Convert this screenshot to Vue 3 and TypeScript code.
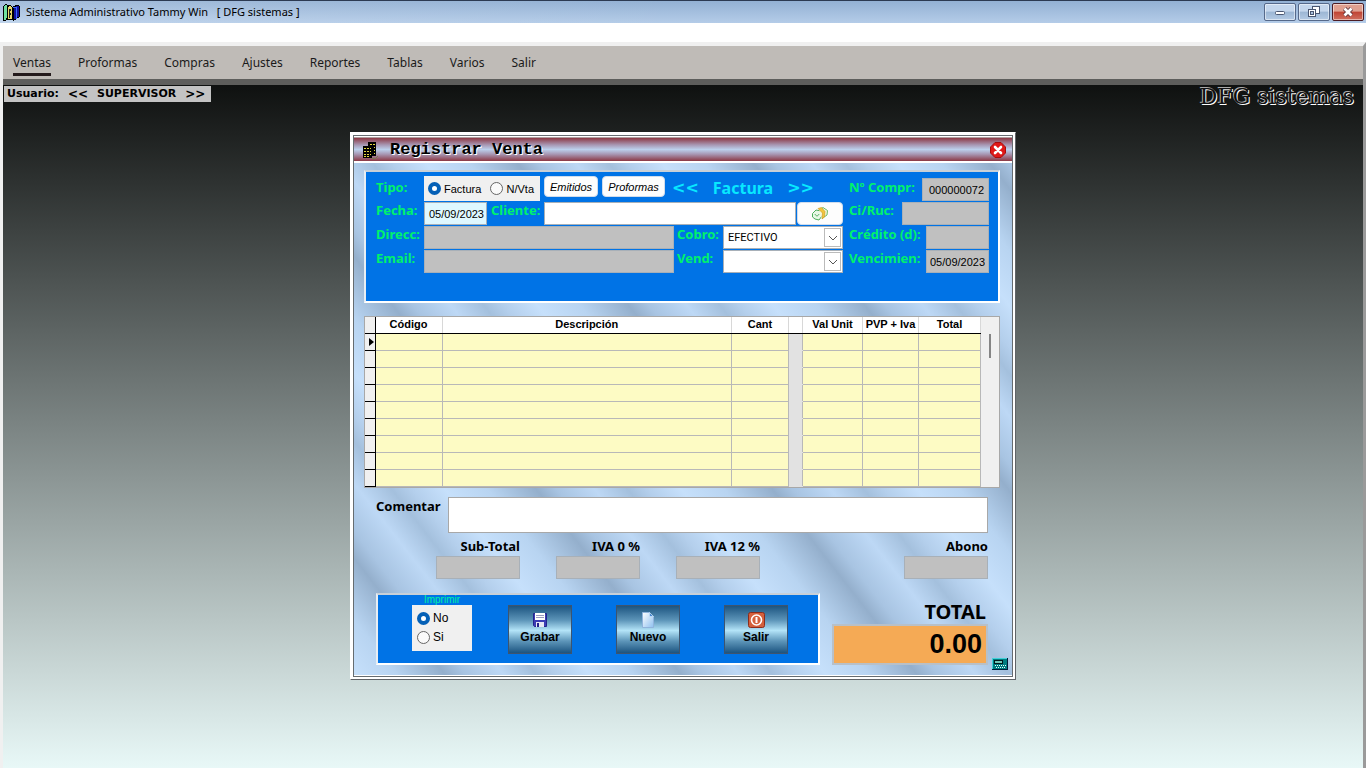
<script setup lang="ts">
import { ref } from 'vue'

const menu: string[] = ['Ventas', 'Proformas', 'Compras', 'Ajustes', 'Reportes', 'Tablas', 'Varios', 'Salir']
const rows: number[] = [1, 2, 3, 4, 5, 6, 7, 8, 9]
const tipo = ref<string>('factura')
const imprimir = ref<string>('no')
const fecha = ref<string>('05/09/2023')
const cliente = ref<string>('')
const cobro = ref<string>('EFECTIVO')
const vendedor = ref<string>('')
const comentario = ref<string>('')
</script>

<template>
  <div class="app">
    <header class="titlebar">
      <svg class="books" width="18" height="18" viewBox="0 0 18 18" shape-rendering="crispEdges">
        <path d="M1 4l3-3 1 1v13l-1 2H1z" fill="#6fe0a0" stroke="#000" />
        <path d="M5 4l3-2 2 2v12H5z" fill="#e8d86a" stroke="#000" />
        <path d="M7 6v9M8 6v2M8 10v2" stroke="#222" />
        <path d="M11 4l5-2 1 1v11l-5 3h-1z" fill="#10109c" stroke="#000" />
        <path d="M11 4l3 0v12" fill="none" stroke="#3a6cff" />
      </svg>
      <h1>Sistema Administrativo Tammy Win &nbsp; [ DFG sistemas ]</h1>
      <div class="winbtns">
        <button type="button" aria-label="Minimizar">
          <svg width="14" height="12" viewBox="0 0 14 12"><rect x="2.500" y="5.500" width="9" height="3" rx="1" fill="#fff" stroke="#4a5670" /></svg>
        </button>
        <button type="button" aria-label="Restaurar">
          <svg width="14" height="12" viewBox="0 0 14 12" fill="#fff" stroke="#4a5670">
            <rect x="5.500" y=".5" width="7" height="7" />
            <rect x="1.500" y="3.500" width="7" height="7" />
            <rect x="3.500" y="5.500" width="3" height="3" fill="#a9c0dc" />
          </svg>
        </button>
        <button type="button" class="close" aria-label="Cerrar ventana">
          <svg width="14" height="12" viewBox="0 0 14 12">
            <path d="M3.500 2.500l7 7M10.500 2.500l-7 7" stroke="#5a3038" stroke-width="4.400" />
            <path d="M3.500 2.500l7 7M10.500 2.500l-7 7" stroke="#fff" stroke-width="2.800" />
          </svg>
        </button>
      </div>
    </header>

    <div class="blank"></div>

    <div class="frame">
      <nav class="menu">
        <a v-for="(item, i) in menu" :key="item" href="#" :class="{ active: i === 0 }">{{ item }}</a>
      </nav>

      <main class="desk">
        <div class="status">
          <span class="user"><span>Usuario:</span><span class="chev">&lt;&lt;</span><span>SUPERVISOR</span><span class="chev">&gt;&gt;</span></span>
          <span class="brand">DFG sistemas</span>
        </div>

        <section class="dialog" aria-labelledby="dlg-title">
          <div class="dialog-title">
            <svg width="16" height="18" viewBox="0 0 16 18" shape-rendering="crispEdges">
              <rect x="6" y="1" width="8" height="14" fill="#000" />
              <rect x="1" y="5" width="9" height="12" fill="#000" />
              <path d="M8 3h5M12 6h1M12 9h1M12 12h1M2 7h7M2 10h7M2 13h7M2 15h5" stroke="#e6d840" stroke-width="1" stroke-dasharray="2 1" />
              <path d="M10 17h4l2-2" stroke="#7a7a50" fill="none" />
            </svg>
            <h2 id="dlg-title">Registrar Venta</h2>
            <button type="button" aria-label="Cerrar">
              <svg width="16" height="16" viewBox="0 0 16 16">
                <path d="M5 .5h6L15.500 5v6L11 15.500H5L.5 11V5z" fill="#e01818" stroke="#a80c0c" />
                <path d="M5 5l6 6M11 5l-6 6" stroke="#fff" stroke-width="2.600" stroke-linecap="round" />
              </svg>
            </button>
          </div>

          <form class="body" @submit.prevent>
            <div class="panel top">
              <div class="left">
                <div class="row first">
                  <span class="lbl w48">Tipo:</span>
                  <div class="radios" role="radiogroup" aria-label="Tipo">
                    <label><input v-model="tipo" type="radio" name="tipo" value="factura" />Factura</label>
                    <label><input v-model="tipo" type="radio" name="tipo" value="nvta" />N/Vta</label>
                  </div>
                  <button type="button" class="mini">Emitidos</button>
                  <button type="button" class="mini wide">Proformas</button>
                  <span class="kind"><span class="chev">&lt;&lt;</span><span>Factura</span><span class="chev">&gt;&gt;</span></span>
                </div>
                <div class="row">
                  <label class="lbl w48" for="fecha">Fecha:</label>
                  <input id="fecha" v-model="fecha" class="box date" type="text" />
                  <label class="lbl cli" for="cliente">Cliente:</label>
                  <input id="cliente" v-model="cliente" class="box white grow" type="text" />
                  <button type="button" class="search" aria-label="Buscar cliente">
                    <svg width="18" height="16" viewBox="0 0 18 16">
                      <path d="M1.500 7.500L5 4l5 1 1 5-3 4-4-1-2.500-2z" fill="#e8f8e6" stroke="#4cae5c" />
                      <path d="M8 4l4-2.500 4.500 3L16 9l-5 3.500" fill="#f4f8dc" stroke="#6cba68" />
                      <path d="M7 2.500l3.500-1 3.500 4-.5 5.500-2.500 2 .5-6z" fill="#f2c63c" stroke="#c89420" stroke-width=".6" />
                      <path d="M4 8c1 2.500 3 2.500 4 0" fill="none" stroke="#4cae5c" />
                    </svg>
                  </button>
                </div>
                <div class="row">
                  <label class="lbl w48" for="dir">Direcc:</label>
                  <input id="dir" class="box long" type="text" readonly />
                  <label class="lbl w49" for="cobro">Cobro:</label>
                  <div class="combo">
                    <select id="cobro" v-model="cobro"><option>EFECTIVO</option></select>
                    <span class="arrow"><svg width="10" height="6" viewBox="0 0 10 6"><path d="M1 1l4 4 4-4" fill="none" stroke="#555" /></svg></span>
                  </div>
                </div>
                <div class="row">
                  <label class="lbl w48" for="email">Email:</label>
                  <input id="email" class="box long" type="text" readonly />
                  <label class="lbl w49" for="vend">Vend:</label>
                  <div class="combo">
                    <select id="vend" v-model="vendedor"><option value=""></option></select>
                    <span class="arrow"><svg width="10" height="6" viewBox="0 0 10 6"><path d="M1 1l4 4 4-4" fill="none" stroke="#555" /></svg></span>
                  </div>
                </div>
              </div>
              <div class="right">
                <div class="row first">
                  <label class="lbl" for="compr">Nº Compr:</label>
                  <input id="compr" class="box w67" type="text" value="000000072" readonly />
                </div>
                <div class="row">
                  <label class="lbl" for="ruc">Ci/Ruc:</label>
                  <input id="ruc" class="box w87" type="text" readonly />
                </div>
                <div class="row">
                  <label class="lbl" for="credito">Crédito (d):</label>
                  <input id="credito" class="box w63" type="text" readonly />
                </div>
                <div class="row">
                  <label class="lbl" for="venc">Vencimien:</label>
                  <input id="venc" class="box w63" type="text" value="05/09/2023" readonly />
                </div>
              </div>
            </div>

            <div class="gridbox">
              <table>
                <colgroup>
                  <col class="c-sel" /><col class="c-cod" /><col /><col class="c-cant" />
                  <col class="c-gap" /><col class="c-val" /><col class="c-pvp" /><col class="c-tot" />
                </colgroup>
                <thead>
                  <tr>
                    <th class="sel"></th><th>Código</th><th>Descripción</th><th>Cant</th>
                    <th></th><th>Val Unit</th><th>PVP + Iva</th><th>Total</th>
                  </tr>
                </thead>
                <tbody>
                  <tr v-for="r in rows" :key="r">
                    <td class="sel"><svg v-if="r === 1" width="5" height="8" viewBox="0 0 5 8"><path d="M0 0l5 4-5 4z" /></svg></td>
                    <td></td><td></td><td></td><td class="gap"></td><td></td><td></td><td></td>
                  </tr>
                </tbody>
              </table>
              <div class="scroll"><div class="thumb"></div></div>
            </div>

            <div class="comment">
              <label for="coment">Comentar</label>
              <textarea id="coment" v-model="comentario"></textarea>
            </div>

            <div class="totals">
              <div class="tot"><label for="sub">Sub-Total</label><input id="sub" class="box" type="text" readonly /></div>
              <div class="tot"><label for="iva0">IVA 0 %</label><input id="iva0" class="box" type="text" readonly /></div>
              <div class="tot"><label for="iva12">IVA 12 %</label><input id="iva12" class="box" type="text" readonly /></div>
              <div class="tot last"><label for="abono">Abono</label><input id="abono" class="box" type="text" readonly /></div>
            </div>

            <div class="bottom">
              <div class="panel actions">
                <fieldset class="print">
                  <legend>Imprimir</legend>
                  <div class="options">
                    <label><input v-model="imprimir" type="radio" name="imprimir" value="no" />No</label>
                    <label><input v-model="imprimir" type="radio" name="imprimir" value="si" />Si</label>
                  </div>
                </fieldset>
                <button type="button" class="act">
                  <svg width="16" height="16" viewBox="0 0 16 16">
                    <path d="M1.500 1.500h13v13h-12l-1-1z" fill="#3c3cb4" stroke="#24248c" />
                    <rect x="3" y="1" width="10" height="7" fill="#fff" />
                    <path d="M4 3.500h8M4 5.500h8" stroke="#9a9ac0" />
                    <rect x="4" y="10" width="8" height="5" fill="#e8e8f4" />
                    <rect x="5" y="11" width="2" height="4" fill="#24248c" />
                  </svg>
                  Grabar
                </button>
                <button type="button" class="act">
                  <svg width="16" height="16" viewBox="0 0 16 16">
                    <defs><linearGradient id="sheet" x1="0" y1="0" x2="1" y2="1"><stop offset="0" stop-color="#fff" /><stop offset="1" stop-color="#8ec0f0" /></linearGradient></defs>
                    <path d="M2.500.5h7l4 4v11h-11z" fill="url(#sheet)" stroke="#90b4dc" />
                    <path d="M9.500.5l4 4h-4z" fill="#4888d0" stroke="#d8ecff" stroke-width=".6" />
                  </svg>
                  Nuevo
                </button>
                <button type="button" class="act">
                  <svg width="17" height="16" viewBox="0 0 17 16">
                    <rect x=".5" y=".5" width="16" height="15" rx="2" fill="#d4603c" stroke="#8c2c1c" />
                    <circle cx="8.500" cy="8" r="5" fill="none" stroke="#fff" stroke-width="1.600" />
                    <path d="M8.500 5v6" stroke="#fff" stroke-width="2" />
                  </svg>
                  Salir
                </button>
              </div>
              <div class="grand">
                <span class="cap">TOTAL</span>
                <output>0.00</output>
              </div>
              <button type="button" class="calc" aria-label="Calculadora">
                <svg width="16" height="12" viewBox="0 0 16 12" shape-rendering="crispEdges">
                  <rect width="16" height="12" fill="#001c38" />
                  <rect width="15" height="11" fill="#40d0d8" />
                  <rect x="1" y="1" width="14" height="10" fill="#007c80" />
                  <rect x="2" y="2" width="9" height="4" fill="#00181c" />
                  <rect x="3" y="3" width="7" height="2" fill="#70c8b8" />
                  <path d="M3 7.500h11M4 9.500h10" stroke="#e8ffff" stroke-dasharray="1 1" />
                </svg>
              </button>
            </div>
          </form>
        </section>
      </main>
    </div>
  </div>
</template>

<style>
body {
  margin: 0;
}
</style>

<style scoped>
* {
  box-sizing: border-box;
}
.app {
  min-height: 100vh;
  display: flex;
  flex-direction: column;
  background: #fff;
  font-family: "Liberation Sans", Arial, sans-serif;
  font-size: 11px;
  color: #000;
}
button,
input,
select,
textarea {
  font: inherit;
  color: inherit;
  margin: 0;
}
h1,
h2 {
  margin: 0;
  font-weight: 400;
}
svg {
  display: block;
}

.titlebar {
  height: 23px;
  display: flex;
  align-items: center;
  padding: 0 2px;
  border-top: 1px solid #2c3a52;
  background: linear-gradient(90deg, rgba(255, 255, 255, 0.15), rgba(255, 255, 255, 0) 50%), linear-gradient(#93b1d4, #b4cce8);
}
.titlebar h1 {
  flex: 1;
  margin-left: 6px;
  font: 11px/18px "Noto Sans", sans-serif;
}
.winbtns {
  display: flex;
  gap: 2px;
}
.winbtns button {
  width: 32px;
  height: 18px;
  padding: 0;
  display: grid;
  place-items: center;
  border: 1px solid #56698a;
  border-radius: 2px;
  box-shadow: inset 0 0 0 1px rgba(255, 255, 255, 0.5);
  background: linear-gradient(#c4d6ec 45%, #9cb6d4 50%, #b4cae4);
}
.winbtns .close {
  border-color: #4c1c24;
  background: linear-gradient(#e0a090 45%, #c04434 50%, #d07060);
}
.blank {
  height: 19px;
}
.frame {
  flex: 1;
  display: flex;
  flex-direction: column;
  border: solid;
  border-width: 4px 3px 0;
  border-color: #f0f0f0 #9a9a9a #fff #f0f0f0;
}
.menu {
  height: 33px;
  display: flex;
  align-items: flex-start;
  gap: 27px;
  padding: 7px 10px 0;
  background: #bfbbb7;
}
.menu a {
  color: #1a1a1a;
  text-decoration: none;
  font: 12px/20px "Noto Sans", sans-serif;
  border-bottom: 3px solid transparent;
}
.menu .active {
  border-color: #241a1c;
}
.desk {
  flex: 1;
  border-top: 6px solid #5e5e5c;
  background: linear-gradient(#0f1110, #e8f8f7);
  padding-bottom: 24px;
}
.status {
  height: 24px;
  display: flex;
  justify-content: space-between;
  align-items: flex-start;
  padding-right: 9px;
}
.user {
  display: flex;
  gap: 9px;
  margin-top: 1px;
  margin-left: 1px;
  padding: 0 6px 0 3px;
  background: #c3c3c3;
  font: 700 11px/16px "DejaVu Sans", sans-serif;
}
.user .chev {
  font-size: 12px;
}
.brand {
  font: 22px/24px "DejaVu Serif", serif;
  color: #111;
  text-shadow: -1px -1px 0 #aaa, 1px 1px 0 #fff;
}

.dialog {
  width: 666px;
  max-width: 100%;
  margin: 23px auto 0;
  border: 1px solid;
  border-color: #fff #606468 #606468 #fff;
  box-shadow: inset 0 0 0 2px #fff, inset 0 0 0 3px #666c70;
  padding: 4px 3px;
  background: #fff;
}
.dialog-title {
  height: 24px;
  display: flex;
  align-items: center;
  padding: 0 6px 0 8px;
  border-top: 1px solid #b0a0a0;
  background: linear-gradient(#8c3844, #a898b4 30%, #bcd0ec 50%, #a898b4 70%, #8c3844);
}
.dialog-title h2 {
  flex: 1;
  margin-left: 12px;
  font: 700 17px/20px "Liberation Mono", monospace;
  text-shadow: 1px 1px 0 #fff;
}
.dialog-title button {
  padding: 0;
  border: 0;
  background: none;
}
.body {
  border-top: 2px solid #fff;
  padding: 7px 12px 10px 10px;
  background:
    repeating-linear-gradient(52deg, #c6e0fb 0, #b8d4f1 34px, #94afcc 72px, #a8c4e2 88px, #bdd8f5 118px, #a4c0dd 144px, #b4cfec 160px, #c6e0fb 186px);
}
.panel {
  background: #0073e6;
  border: 2px solid #fff;
  border-top-color: #c8d0d8;
  border-left-color: #e8eef4;
}
.top {
  display: flex;
  gap: 6px;
  height: 133px;
  padding: 4px 9px 0 10px;
}
.left {
  flex: 1;
}
.right {
  width: 140px;
}
.row {
  display: flex;
  align-items: flex-start;
  height: 24px;
}
.row.first {
  height: 26px;
}
.row.first .lbl {
  line-height: 23px;
}
.lbl {
  color: #00f26c;
  font: 700 13px/17px "Noto Sans", sans-serif;
  white-space: nowrap;
  flex: none;
}
.w48 {
  width: 48px;
}
.w49 {
  width: 49px;
  padding-left: 3px;
}
.cli {
  width: 57px;
  padding-left: 4px;
}
.radios {
  width: 116px;
  height: 25px;
  display: flex;
  align-items: center;
  justify-content: space-between;
  padding: 0 6px 0 4px;
  background: #f0f0f0;
}
.radios label {
  display: flex;
  align-items: center;
  gap: 3px;
}
input[type="radio"] {
  appearance: none;
  width: 13px;
  height: 13px;
  border: 1px solid #666;
  border-radius: 50%;
  background: #fafafa;
}
input[type="radio"]:checked {
  border: 4px solid #0560b6;
  background: #fff;
}
.mini {
  width: 54px;
  height: 21px;
  margin-left: 4px;
  padding: 0;
  border: 1px solid #d0dcec;
  border-radius: 4px;
  background: #fdfdfd;
  font-style: italic;
}
.mini.wide {
  width: 63px;
}
.kind {
  flex: 1;
  display: flex;
  gap: 14px;
  padding-left: 7px;
  color: #08e8ff;
  font: 700 16px/24px "Noto Sans", sans-serif;
}
.kind .chev {
  font-family: "DejaVu Sans", sans-serif;
}
.box {
  height: 23px;
  min-width: 0;
  padding: 0 4px;
  border: 1px solid #a8b0b8;
  background: #c0c0c0;
  text-align: right;
}
.date {
  width: 63px;
  padding: 0 2px;
  background: #dff8ff;
}
.white {
  background: #fff;
  text-align: left;
}
.grow {
  flex: 1;
}
.long {
  flex: 1;
}
.right .row {
  justify-content: space-between;
}
.right .row.first .box {
  margin-top: 2px;
}
.w67 {
  width: 67px;
}
.w87 {
  width: 87px;
}
.w63 {
  width: 63px;
  padding: 0 3px;
}
.search {
  width: 46px;
  height: 23px;
  margin-left: 1px;
  padding: 0;
  display: grid;
  place-items: center;
  border: 1px solid #d0dcec;
  border-radius: 4px;
  background: #fdfdfd;
}
.combo {
  width: 120px;
  height: 23px;
  display: flex;
  align-items: center;
  padding-right: 1px;
  border: 1px solid #a8b0b8;
  background: #fff;
}
.combo select {
  appearance: none;
  flex: 1;
  border: 0;
  padding: 0 4px;
  background: transparent;
  font-family: Roboto, sans-serif;
}
.arrow {
  width: 17px;
  height: 19px;
  display: grid;
  place-items: center;
  border: 1px solid #bbb;
}

.gridbox {
  display: flex;
  margin-top: 13px;
  border: 1px solid #a8a8a8;
  background: #f0f0f0;
}
table {
  flex: 1;
  border-collapse: collapse;
  table-layout: fixed;
  background: #fdfbc4;
}
.c-sel {
  width: 10px;
}
.c-cod {
  width: 67px;
}
.c-cant {
  width: 57px;
}
.c-gap {
  width: 14px;
}
.c-val {
  width: 60px;
}
.c-pvp {
  width: 56px;
}
.c-tot {
  width: 62px;
}
th,
td {
  height: 17px;
  padding: 0;
  border-right: 1px solid #b8b8b8;
  border-bottom: 1px solid #b8b8b8;
}
th {
  height: 16px;
  background: #fff;
  line-height: 15px;
  white-space: nowrap;
  border-right-color: #d8d8d8;
  border-bottom-color: #000;
}
.sel {
  background: #f0f0f0;
  border-right-color: #000;
  border-bottom-color: #000;
}
.sel svg {
  margin-left: 4px;
}
.gap {
  background: #e2e2e2;
  border-bottom-color: #e2e2e2;
}
.scroll {
  width: 18px;
  padding: 17px 0 0 8px;
}
.thumb {
  width: 2px;
  height: 24px;
  background: #858585;
}

.comment {
  display: flex;
  align-items: flex-start;
  margin-top: 9px;
  padding: 0 12px;
}
.comment label {
  width: 72px;
  font: 700 13px/18px "Noto Sans", sans-serif;
}
.comment textarea {
  flex: 1;
  height: 36px;
  padding: 2px;
  border: 1px solid #a8a8a8;
  border-radius: 0;
  background: #fff;
  resize: none;
}
.totals {
  display: flex;
  gap: 36px;
  margin-top: 3px;
  padding: 0 12px 0 72px;
}
.tot {
  width: 84px;
  display: flex;
  flex-direction: column;
}
.tot label {
  font: 700 13px/20px "Noto Sans", sans-serif;
  text-align: right;
  white-space: nowrap;
}
.tot.last {
  margin-left: auto;
}
.bottom {
  display: flex;
  align-items: flex-end;
  margin-top: 14px;
  padding-left: 12px;
}
.actions {
  flex: 1;
  height: 72px;
  display: flex;
  align-items: flex-start;
  padding-left: 34px;
}
.print {
  width: 60px;
  margin: 0 36px 0 0;
  padding: 0;
  border: 0;
}
.print legend {
  padding: 0;
  margin: 0 auto;
  color: #00f2a0;
  font-size: 10px;
  line-height: 10px;
}
.options {
  height: 46px;
  padding: 4px 5px;
  background: #f0f0f0;
  font-size: 12px;
}
.options label {
  display: flex;
  align-items: center;
  gap: 3px;
  height: 19px;
}
.act {
  width: 64px;
  height: 49px;
  margin: 10px 44px 0 0;
  padding: 0 0 2px;
  display: flex;
  flex-direction: column;
  align-items: center;
  justify-content: center;
  gap: 2px;
  border: 1px solid #3c5470;
  background: linear-gradient(#1c5480, #5c94b8 30%, #b4e4f8 52%, #5c94b8 75%, #1c5480);
  font-size: 12px;
  font-weight: 700;
  line-height: 14px;
}
.act:last-child {
  margin-right: 0;
}
.grand {
  width: 156px;
  margin-left: 12px;
  display: flex;
  flex-direction: column;
}
.cap {
  padding-right: 2px;
  text-align: right;
  font: 700 20px/24px "Noto Sans", sans-serif;
}
output {
  height: 41px;
  padding-right: 4px;
  border: 2px solid #b8c0c8;
  background: #f5aa55;
  text-align: right;
  font-size: 27px;
  font-weight: 700;
  line-height: 36px;
}
.calc {
  margin: 0 -8px -5px 4px;
  padding: 0;
  border: 0;
  background: none;
}
</style>
